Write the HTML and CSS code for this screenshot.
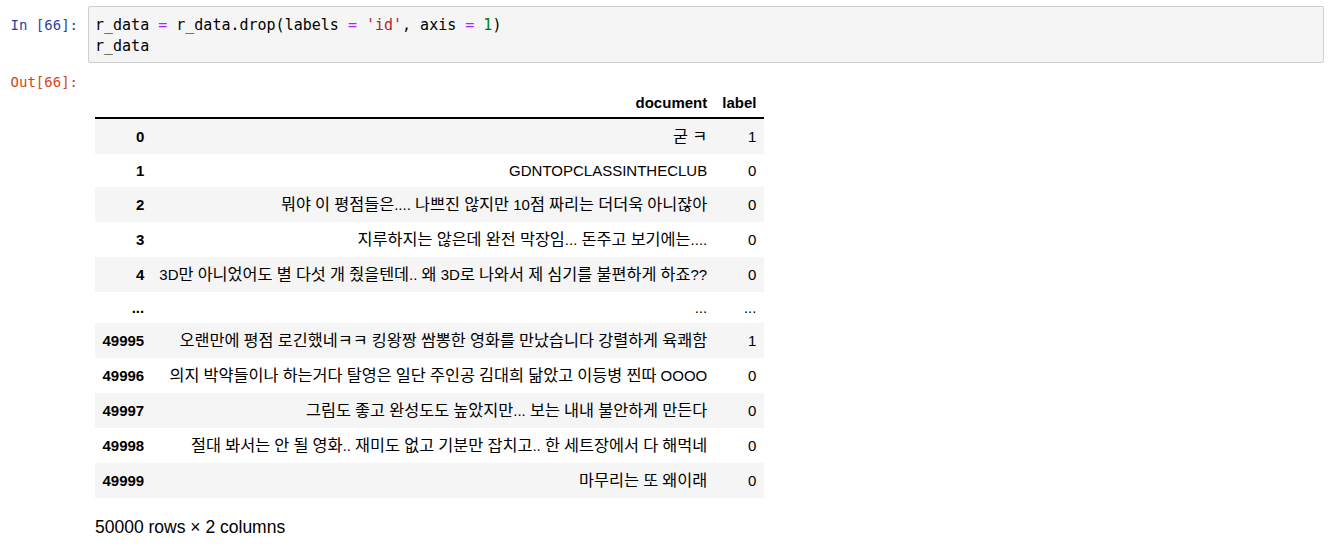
FILE: index.html
```html
<!DOCTYPE html>
<html lang="ko">
<head>
<meta charset="utf-8">
<title>r_data</title>
<link rel="stylesheet" href="styles.css">
</head>
<body>
<div class="cell">
  <div class="input-row">
    <div class="prompt in-prompt">In&nbsp;[66]:</div>
    <div class="code-box">
      <div class="code-line">r_data <span class="op">=</span> r_data.drop(labels <span class="op">=</span> <span class="str">'id'</span>, axis <span class="op">=</span> <span class="num">1</span>)</div>
      <div class="code-line">r_data</div>
    </div>
  </div>
  <div class="output-row">
    <div class="prompt out-prompt">Out[66]:</div>
    <div class="output">
      <table class="df">
        <thead>
          <tr><th></th><th class="doc-col">document</th><th>label</th></tr>
        </thead>
        <tbody>
          <tr><th>0</th><td><span class="ko">굳</span> <span class="ko">ㅋ</span></td><td>1</td></tr>
          <tr class="latin"><th>1</th><td>GDNTOPCLASSINTHECLUB</td><td>0</td></tr>
          <tr><th>2</th><td><span class="ko">뭐야</span> <span class="ko">이</span> <span class="ko">평점들은</span>.... <span class="ko">나쁘진</span> <span class="ko">않지만</span> 10<span class="ko">점</span> <span class="ko">짜리는</span> <span class="ko">더더욱</span> <span class="ko">아니잖아</span></td><td>0</td></tr>
          <tr><th>3</th><td><span class="ko">지루하지는</span> <span class="ko">않은데</span> <span class="ko">완전</span> <span class="ko">막장임</span>... <span class="ko">돈주고</span> <span class="ko">보기에는</span>....</td><td>0</td></tr>
          <tr><th>4</th><td>3D<span class="ko">만</span> <span class="ko">아니었어도</span> <span class="ko">별</span> <span class="ko">다섯</span> <span class="ko">개</span> <span class="ko">줬을텐데</span>.. <span class="ko">왜</span> 3D<span class="ko">로</span> <span class="ko">나와서</span> <span class="ko">제</span> <span class="ko">심기를</span> <span class="ko">불편하게</span> <span class="ko">하죠</span>??</td><td>0</td></tr>
          <tr class="dots"><th>...</th><td>...</td><td>...</td></tr>
          <tr><th>49995</th><td><span class="ko">오랜만에</span> <span class="ko">평점</span> <span class="ko">로긴했네ㅋㅋ</span> <span class="ko">킹왕짱</span> <span class="ko">쌈뽕한</span> <span class="ko">영화를</span> <span class="ko">만났습니다</span> <span class="ko">강렬하게</span> <span class="ko">육쾌함</span></td><td>1</td></tr>
          <tr><th>49996</th><td><span class="ko">의지</span> <span class="ko">박약들이나</span> <span class="ko">하는거다</span> <span class="ko">탈영은</span> <span class="ko">일단</span> <span class="ko">주인공</span> <span class="ko">김대희</span> <span class="ko">닮았고</span> <span class="ko">이등병</span> <span class="ko">찐따</span> OOOO</td><td>0</td></tr>
          <tr><th>49997</th><td><span class="ko">그림도</span> <span class="ko">좋고</span> <span class="ko">완성도도</span> <span class="ko">높았지만</span>... <span class="ko">보는</span> <span class="ko">내내</span> <span class="ko">불안하게</span> <span class="ko">만든다</span></td><td>0</td></tr>
          <tr><th>49998</th><td><span class="ko">절대</span> <span class="ko">봐서는</span> <span class="ko">안</span> <span class="ko">될</span> <span class="ko">영화</span>.. <span class="ko">재미도</span> <span class="ko">없고</span> <span class="ko">기분만</span> <span class="ko">잡치고</span>.. <span class="ko">한</span> <span class="ko">세트장에서</span> <span class="ko">다</span> <span class="ko">해먹네</span></td><td>0</td></tr>
          <tr><th>49999</th><td><span class="ko">마무리는</span> <span class="ko">또</span> <span class="ko">왜이래</span></td><td>0</td></tr>
        </tbody>
      </table>
      <p class="shape">50000 rows × 2 columns</p>
    </div>
  </div>
</div>
</body>
</html>
```

FILE: styles.css
```css
html, body {
  margin: 0;
  padding: 0;
  background: #ffffff;
}

body {
  font-family: "Liberation Sans", "Noto Sans CJK KR", sans-serif;
  color: #000;
}

.cell {
  padding-top: 6px;
}

.input-row,
.output-row {
  display: flex;
  align-items: flex-start;
}

.prompt {
  width: 78px;
  flex: none;
  padding-right: 10px;
  text-align: right;
  font-family: "DejaVu Sans Mono", monospace;
  font-size: 14px;
  line-height: 21px;
}

.in-prompt {
  color: #303f9f;
  padding-top: 9px;
}

.out-prompt {
  color: #d84315;
  padding-top: 9px;
}

.code-box {
  flex: none;
  width: 1222px;
  background: #f5f5f5;
  border: 1px solid #cfcfcf;
  border-radius: 2px;
  padding: 8px 6px 5px 6px;
  font-family: "DejaVu Sans Mono", monospace;
  font-size: 15px;
  line-height: 21px;
  color: #000;
}

.code-line {
  white-space: pre;
}

.op { color: #aa22ff; }
.str { color: #ba2121; }
.num { color: #008000; }

.output {
  padding-left: 7px;
  padding-top: 21px;
}

.df {
  border-collapse: collapse;
  border-spacing: 0;
  font-size: 15px;
  font-family: "Liberation Sans", "Noto Sans CJK KR", sans-serif;
}

.df th,
.df td {
  padding: 7.5px;
  text-align: right;
  vertical-align: middle;
  white-space: nowrap;
  line-height: 20px;
}

.df th {
  font-weight: bold;
}

.df td {
  font-weight: normal;
}

.df .ko {
  font-family: "Noto Sans CJK KR", sans-serif;
  font-size: 16.3px;
  line-height: 0;
}

.df thead tr {
  border-bottom: 2px solid #000;
}

.df thead th {
  padding-top: 10px;
  padding-bottom: 6px;
  line-height: 17px;
}

.df .doc-col {
  width: 548px;
}

.df tbody tr:nth-child(odd) {
  background: #f5f5f5;
}

.df tr.latin th,
.df tr.latin td {
  line-height: 18px;
}

.df tr.dots th,
.df tr.dots td {
  line-height: 16px;
}

.shape {
  margin: 19px 0 0 0;
  font-size: 17.5px;
  line-height: 20px;
}
```
